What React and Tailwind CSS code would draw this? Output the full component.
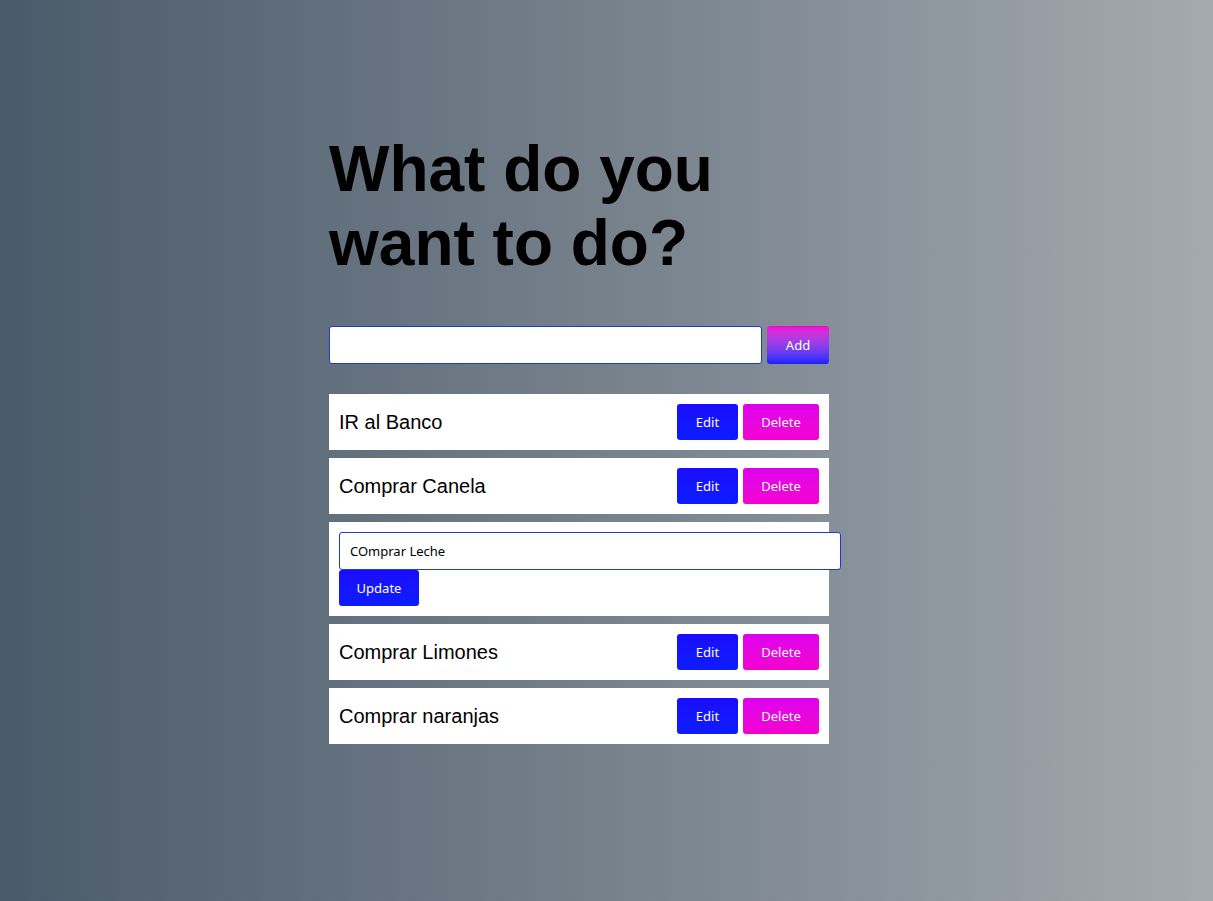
import { useState } from "react";

const initialTodos = [
    { id: 1, text: "IR al Banco" },
    { id: 2, text: "Comprar Canela" },
    { id: 3, text: "COmprar Leche" },
    { id: 4, text: "Comprar Limones" },
    { id: 5, text: "Comprar naranjas" },
];

export default function App() {
    const [todos, setTodos] = useState(initialTodos);
    const [value, setValue] = useState("");
    const [editingId, setEditingId] = useState(3);
    const [editValue, setEditValue] = useState("COmprar Leche");

    const btn = "rounded-[3px] pt-[1px] text-white text-[13px] [font-family:'Noto_Sans','Open_Sans',sans-serif]";

    const handleAdd = () => {
        if (!value.trim()) return;
        setTodos([...todos, { id: Date.now(), text: value }]);
        setValue("");
    };

    const handleUpdate = (id) => {
        setTodos(todos.map((t) => (t.id === id ? { ...t, text: editValue } : t)));
        setEditingId(null);
    };

    return (
        <div className="flex min-h-[901px] justify-center bg-gradient-to-r from-[#4b5a6a] to-[#a4aaaf] pr-[55px] pt-[133px] [font-family:'Liberation_Sans',Arial,sans-serif]">
            <div className="w-[500px]">
                <h1 className="text-[64px] font-bold leading-[73.6px] text-black">What do you want to do?</h1>

                <div className="mt-[46px] flex gap-[5px]">
                    <input
                        value={value}
                        onChange={(e) => setValue(e.target.value)}
                        className="h-[38px] w-[433px] rounded-[3px] border border-[#1f3ad0] bg-white px-[10px] text-[13px] outline-none"
                    />
                    <button onClick={handleAdd} className={`${btn} h-[38px] w-[62px] bg-gradient-to-b from-[#f200d2] to-[#1420ff]`}>
                        Add
                    </button>
                </div>

                <ul className="mt-[30px] flex flex-col gap-[8px]">
                    {todos.map((todo) =>
                        editingId === todo.id ? (
                            <li key={todo.id} className="bg-white p-[10px]">
                                <input
                                    value={editValue}
                                    onChange={(e) => setEditValue(e.target.value)}
                                    className="block h-[38px] w-[502px] rounded-[3px] border border-[#1f3ad0] bg-white px-[10px] text-[13px] text-black outline-none [font-family:'Noto_Sans','Open_Sans',sans-serif]"
                                />
                                <button onClick={() => handleUpdate(todo.id)} className={`${btn} block h-[36px] w-[80px] bg-gradient-to-b from-[#1a0cff] to-[#0c1cff]`}>
                                    Update
                                </button>
                            </li>
                        ) : (
                            <li key={todo.id} className="flex h-[56px] items-center justify-between bg-white px-[10px]">
                                <span className="text-[20px] text-black">{todo.text}</span>
                                <div className="flex gap-[5px]">
                                    <button
                                        onClick={() => { setEditingId(todo.id); setEditValue(todo.text); }}
                                        className={`${btn} h-[36px] w-[61px] bg-gradient-to-b from-[#1a0cff] to-[#0c1cff]`}
                                    >
                                        Edit
                                    </button>
                                    <button
                                        onClick={() => setTodos(todos.filter((t) => t.id !== todo.id))}
                                        className={`${btn} h-[36px] w-[76px] bg-gradient-to-b from-[#de00ec] to-[#f400d0]`}
                                    >
                                        Delete
                                    </button>
                                </div>
                            </li>
                        )
                    )}
                </ul>
            </div>
        </div>
    );
}
